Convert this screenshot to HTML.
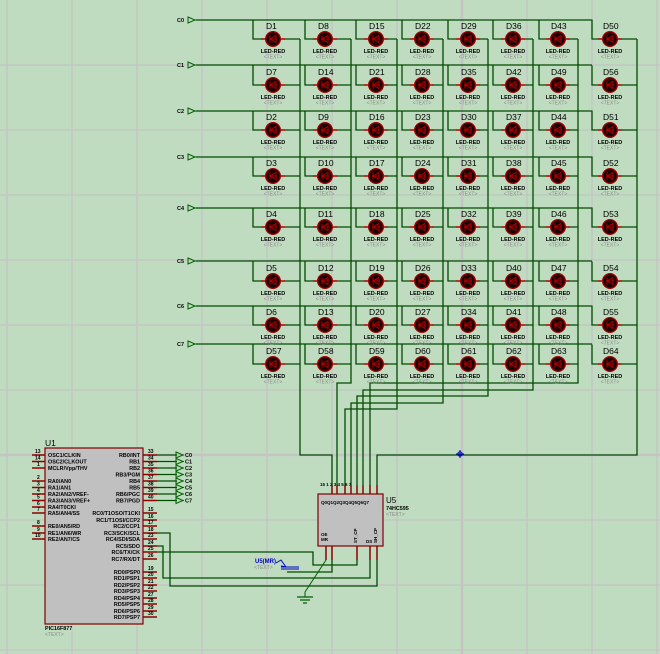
<!DOCTYPE html>
<html><head><meta charset="utf-8"><style>
html,body{margin:0;padding:0;background:#c0dcc0;}
svg{display:block;font-family:"Liberation Sans",sans-serif;}
.w{fill:none;stroke:#004c00;stroke-width:1.3}
.g{stroke:#c4c4c4;stroke-width:1.3}
.dl{font-size:8.5px;fill:#000}
.lr{font-size:5.5px;font-weight:bold;fill:#000}
.tx{font-size:5px;fill:#888}
.pn{font-size:5px;fill:#000;font-weight:bold}
.pl{font-size:5.4px;fill:#000;font-weight:bold}
.p{stroke:#900000;stroke-width:1.5}
</style></head><body>
<svg width="660" height="654" viewBox="0 0 660 654" xmlns="http://www.w3.org/2000/svg">
<defs>
<g id="L">
<line x1="-12" y1="0" x2="-7" y2="0" stroke="#c00000" stroke-width="1.4"/>
<line x1="7" y1="0" x2="12" y2="0" stroke="#c00000" stroke-width="1.4"/>
<circle r="7.3" fill="#1a0000" stroke="#a00000" stroke-width="1.4"/>
<path d="M-4,0 H4 M3,-3.5 V3.5 L-3,0 Z M-3,-3.5 V3.5" stroke="#b00000" stroke-width="1" fill="none"/>
</g>
<g id="R">
<path class="w" d="M253,-19.5V0H300M305,-19.5V0H351M356,-19.5V0H397M402,-19.5V0H443M448,-19.5V0H488M493,-19.5V0H533M539,-19.5V0H578M592,-19.5V0H637"/>
<use href="#L" x="273"/><use href="#L" x="325"/><use href="#L" x="376"/><use href="#L" x="422"/><use href="#L" x="468"/><use href="#L" x="513"/><use href="#L" x="558"/><use href="#L" x="610"/>
</g>
<path id="A" d="M0,-3 L7,0 L0,3 Z M7,0 H8" fill="none" stroke="#006000" stroke-width="1"/>
</defs>
<!-- grid -->
<g class="g">
<line x1="7" y1="0" x2="7" y2="654"/><line x1="72" y1="0" x2="72" y2="654"/><line x1="137" y1="0" x2="137" y2="654"/><line x1="202" y1="0" x2="202" y2="654"/><line x1="267" y1="0" x2="267" y2="654"/><line x1="332" y1="0" x2="332" y2="654"/><line x1="397" y1="0" x2="397" y2="654"/><line x1="462" y1="0" x2="462" y2="654" stroke-width="2.5"/><line x1="527" y1="0" x2="527" y2="654"/><line x1="592" y1="0" x2="592" y2="654"/><line x1="657" y1="0" x2="657" y2="654"/>
<line x1="0" y1="65" x2="660" y2="65"/><line x1="0" y1="130" x2="660" y2="130"/><line x1="0" y1="195" x2="660" y2="195"/><line x1="0" y1="260" x2="660" y2="260"/><line x1="0" y1="325" x2="660" y2="325"/><line x1="0" y1="390" x2="660" y2="390"/><line x1="0" y1="455" x2="660" y2="455" stroke-width="2.5"/><line x1="0" y1="520" x2="660" y2="520"/><line x1="0" y1="585" x2="660" y2="585"/><line x1="0" y1="650" x2="660" y2="650"/>
</g>
<!-- row lines -->
<path class="w" d="M196,20H592M196,65H592M196,111H592M196,157H592M196,208H592M196,261H592M196,306H592M196,344H592"/>
<!-- column buses -->
<path class="w" d="M300,39V455H332V485M351,39V383H337V485M397,39V409H345V485M443,39V403H351V485M488,39V396H357V485M533,39V390H363V485M578,39V383H370V485M637,39V455H377V485"/>
<g transform="translate(-1,-1)"><path d="M461,451V459M457,455H465" stroke="#0000c0" stroke-width="1"/><circle cx="461" cy="455" r="2.2" fill="none" stroke="#0000c0"/></g>
<!-- input ports -->
<g font-size="5.5" font-weight="bold">
<text x="177" y="22">C0</text><use href="#A" x="188" y="20"/>
<text x="177" y="67">C1</text><use href="#A" x="188" y="65"/>
<text x="177" y="113">C2</text><use href="#A" x="188" y="111"/>
<text x="177" y="159">C3</text><use href="#A" x="188" y="157"/>
<text x="177" y="210">C4</text><use href="#A" x="188" y="208"/>
<text x="177" y="263">C5</text><use href="#A" x="188" y="261"/>
<text x="177" y="308">C6</text><use href="#A" x="188" y="306"/>
<text x="177" y="346">C7</text><use href="#A" x="188" y="344"/>
</g>
<!-- LED rows -->
<use href="#R" y="39"/><use href="#R" y="85"/><use href="#R" y="130"/><use href="#R" y="176"/><use href="#R" y="227"/><use href="#R" y="281"/><use href="#R" y="325"/><use href="#R" y="364"/>
<g class="dl">
<g transform="translate(0,29)"><text x="266">D1</text><text x="318">D8</text><text x="369">D15</text><text x="415">D22</text><text x="461">D29</text><text x="506">D36</text><text x="551">D43</text><text x="603">D50</text></g>
<g transform="translate(0,75)"><text x="266">D7</text><text x="318">D14</text><text x="369">D21</text><text x="415">D28</text><text x="461">D35</text><text x="506">D42</text><text x="551">D49</text><text x="603">D56</text></g>
<g transform="translate(0,120)"><text x="266">D2</text><text x="318">D9</text><text x="369">D16</text><text x="415">D23</text><text x="461">D30</text><text x="506">D37</text><text x="551">D44</text><text x="603">D51</text></g>
<g transform="translate(0,166)"><text x="266">D3</text><text x="318">D10</text><text x="369">D17</text><text x="415">D24</text><text x="461">D31</text><text x="506">D38</text><text x="551">D45</text><text x="603">D52</text></g>
<g transform="translate(0,217)"><text x="266">D4</text><text x="318">D11</text><text x="369">D18</text><text x="415">D25</text><text x="461">D32</text><text x="506">D39</text><text x="551">D46</text><text x="603">D53</text></g>
<g transform="translate(0,271)"><text x="266">D5</text><text x="318">D12</text><text x="369">D19</text><text x="415">D26</text><text x="461">D33</text><text x="506">D40</text><text x="551">D47</text><text x="603">D54</text></g>
<g transform="translate(0,315)"><text x="266">D6</text><text x="318">D13</text><text x="369">D20</text><text x="415">D27</text><text x="461">D34</text><text x="506">D41</text><text x="551">D48</text><text x="603">D55</text></g>
<g transform="translate(0,354)"><text x="266">D57</text><text x="318">D58</text><text x="369">D59</text><text x="415">D60</text><text x="461">D61</text><text x="506">D62</text><text x="551">D63</text><text x="603">D64</text></g>
</g>
<g text-anchor="middle">
<g transform="translate(0,53)"><g class="lr"><text x="273">LED-RED</text><text x="325">LED-RED</text><text x="376">LED-RED</text><text x="422">LED-RED</text><text x="468">LED-RED</text><text x="513">LED-RED</text><text x="558">LED-RED</text><text x="610">LED-RED</text></g><g class="tx" transform="translate(0,5.5)"><text x="273">&lt;TEXT&gt;</text><text x="325">&lt;TEXT&gt;</text><text x="376">&lt;TEXT&gt;</text><text x="422">&lt;TEXT&gt;</text><text x="468">&lt;TEXT&gt;</text><text x="513">&lt;TEXT&gt;</text><text x="558">&lt;TEXT&gt;</text><text x="610">&lt;TEXT&gt;</text></g></g>
<g transform="translate(0,99)"><g class="lr"><text x="273">LED-RED</text><text x="325">LED-RED</text><text x="376">LED-RED</text><text x="422">LED-RED</text><text x="468">LED-RED</text><text x="513">LED-RED</text><text x="558">LED-RED</text><text x="610">LED-RED</text></g><g class="tx" transform="translate(0,5.5)"><text x="273">&lt;TEXT&gt;</text><text x="325">&lt;TEXT&gt;</text><text x="376">&lt;TEXT&gt;</text><text x="422">&lt;TEXT&gt;</text><text x="468">&lt;TEXT&gt;</text><text x="513">&lt;TEXT&gt;</text><text x="558">&lt;TEXT&gt;</text><text x="610">&lt;TEXT&gt;</text></g></g>
<g transform="translate(0,144)"><g class="lr"><text x="273">LED-RED</text><text x="325">LED-RED</text><text x="376">LED-RED</text><text x="422">LED-RED</text><text x="468">LED-RED</text><text x="513">LED-RED</text><text x="558">LED-RED</text><text x="610">LED-RED</text></g><g class="tx" transform="translate(0,5.5)"><text x="273">&lt;TEXT&gt;</text><text x="325">&lt;TEXT&gt;</text><text x="376">&lt;TEXT&gt;</text><text x="422">&lt;TEXT&gt;</text><text x="468">&lt;TEXT&gt;</text><text x="513">&lt;TEXT&gt;</text><text x="558">&lt;TEXT&gt;</text><text x="610">&lt;TEXT&gt;</text></g></g>
<g transform="translate(0,190)"><g class="lr"><text x="273">LED-RED</text><text x="325">LED-RED</text><text x="376">LED-RED</text><text x="422">LED-RED</text><text x="468">LED-RED</text><text x="513">LED-RED</text><text x="558">LED-RED</text><text x="610">LED-RED</text></g><g class="tx" transform="translate(0,5.5)"><text x="273">&lt;TEXT&gt;</text><text x="325">&lt;TEXT&gt;</text><text x="376">&lt;TEXT&gt;</text><text x="422">&lt;TEXT&gt;</text><text x="468">&lt;TEXT&gt;</text><text x="513">&lt;TEXT&gt;</text><text x="558">&lt;TEXT&gt;</text><text x="610">&lt;TEXT&gt;</text></g></g>
<g transform="translate(0,241)"><g class="lr"><text x="273">LED-RED</text><text x="325">LED-RED</text><text x="376">LED-RED</text><text x="422">LED-RED</text><text x="468">LED-RED</text><text x="513">LED-RED</text><text x="558">LED-RED</text><text x="610">LED-RED</text></g><g class="tx" transform="translate(0,5.5)"><text x="273">&lt;TEXT&gt;</text><text x="325">&lt;TEXT&gt;</text><text x="376">&lt;TEXT&gt;</text><text x="422">&lt;TEXT&gt;</text><text x="468">&lt;TEXT&gt;</text><text x="513">&lt;TEXT&gt;</text><text x="558">&lt;TEXT&gt;</text><text x="610">&lt;TEXT&gt;</text></g></g>
<g transform="translate(0,295)"><g class="lr"><text x="273">LED-RED</text><text x="325">LED-RED</text><text x="376">LED-RED</text><text x="422">LED-RED</text><text x="468">LED-RED</text><text x="513">LED-RED</text><text x="558">LED-RED</text><text x="610">LED-RED</text></g><g class="tx" transform="translate(0,5.5)"><text x="273">&lt;TEXT&gt;</text><text x="325">&lt;TEXT&gt;</text><text x="376">&lt;TEXT&gt;</text><text x="422">&lt;TEXT&gt;</text><text x="468">&lt;TEXT&gt;</text><text x="513">&lt;TEXT&gt;</text><text x="558">&lt;TEXT&gt;</text><text x="610">&lt;TEXT&gt;</text></g></g>
<g transform="translate(0,339)"><g class="lr"><text x="273">LED-RED</text><text x="325">LED-RED</text><text x="376">LED-RED</text><text x="422">LED-RED</text><text x="468">LED-RED</text><text x="513">LED-RED</text><text x="558">LED-RED</text><text x="610">LED-RED</text></g><g class="tx" transform="translate(0,5.5)"><text x="273">&lt;TEXT&gt;</text><text x="325">&lt;TEXT&gt;</text><text x="376">&lt;TEXT&gt;</text><text x="422">&lt;TEXT&gt;</text><text x="468">&lt;TEXT&gt;</text><text x="513">&lt;TEXT&gt;</text><text x="558">&lt;TEXT&gt;</text><text x="610">&lt;TEXT&gt;</text></g></g>
<g transform="translate(0,378)"><g class="lr"><text x="273">LED-RED</text><text x="325">LED-RED</text><text x="376">LED-RED</text><text x="422">LED-RED</text><text x="468">LED-RED</text><text x="513">LED-RED</text><text x="558">LED-RED</text><text x="610">LED-RED</text></g><g class="tx" transform="translate(0,5.5)"><text x="273">&lt;TEXT&gt;</text><text x="325">&lt;TEXT&gt;</text><text x="376">&lt;TEXT&gt;</text><text x="422">&lt;TEXT&gt;</text><text x="468">&lt;TEXT&gt;</text><text x="513">&lt;TEXT&gt;</text><text x="558">&lt;TEXT&gt;</text><text x="610">&lt;TEXT&gt;</text></g></g>
</g>
<!-- bottom wiring -->
<path class="w" d="M157,533H170V586H377V560M157,546H163V578H370V560M157,552H313V565H357V560M287,572H332V560M157,455H177M157,461.5H177M157,468H177M157,474.5H177M157,481H177M157,487.5H177M157,494H177M157,500.5H177"/>
<path d="M326,560 L305,592 V597" fill="none" stroke="#006000" stroke-width="1"/>
<path d="M297,597H313M300,600H310M303,603H307" stroke="#006000" stroke-width="1.2"/>
<!-- C outputs -->
<g font-size="5.5" font-weight="bold">
<use href="#A" x="176" y="455"/><text x="185" y="457">C0</text>
<use href="#A" x="176" y="461.5"/><text x="185" y="463.5">C1</text>
<use href="#A" x="176" y="468"/><text x="185" y="470">C2</text>
<use href="#A" x="176" y="474.5"/><text x="185" y="476.5">C3</text>
<use href="#A" x="176" y="481"/><text x="185" y="483">C4</text>
<use href="#A" x="176" y="487.5"/><text x="185" y="489.5">C5</text>
<use href="#A" x="176" y="494"/><text x="185" y="496">C6</text>
<use href="#A" x="176" y="500.5"/><text x="185" y="502.5">C7</text>
</g>
<!-- U1 -->
<text x="45" y="446" font-size="8.5">U1</text>
<rect x="45" y="448" width="98" height="176" fill="#c0c0c0" stroke="#800000" stroke-width="1.2"/>
<g class="p">
<path d="M32,455H45M32,461.5H45M32,468H45M32,481H45M32,487.5H45M32,494H45M32,500.5H45M32,507H45M32,513H45M32,526H45M32,533H45M32,539H45"/>
<path d="M143,455H157M143,461.5H157M143,468H157M143,474.5H157M143,481H157M143,487.5H157M143,494H157M143,500.5H157M143,513H157M143,520H157M143,526H157M143,533H157M143,539H157M143,546H157M143,552H157M143,559H157M143,572H157M143,578H157M143,585H157M143,591H157M143,598H157M143,604H157M143,611H157M143,617H157"/>
</g>
<g class="pn">
<text x="35" y="453">13</text><text x="35" y="459.5">14</text><text x="37" y="466">1</text><text x="37" y="479">2</text><text x="37" y="485.5">3</text><text x="37" y="492">4</text><text x="37" y="498.5">5</text><text x="37" y="505">6</text><text x="37" y="511">7</text><text x="37" y="524">8</text><text x="37" y="531">9</text><text x="35" y="537">10</text>
<text x="148" y="453">33</text><text x="148" y="459.5">34</text><text x="148" y="466">35</text><text x="148" y="472.5">36</text><text x="148" y="479">37</text><text x="148" y="485.5">38</text><text x="148" y="492">39</text><text x="148" y="498.5">40</text>
<text x="148" y="511">15</text><text x="148" y="518">16</text><text x="148" y="524">17</text><text x="148" y="531">18</text><text x="148" y="537">23</text><text x="148" y="544">24</text><text x="148" y="550">25</text><text x="148" y="557">26</text>
<text x="148" y="570">19</text><text x="148" y="576">20</text><text x="148" y="583">21</text><text x="148" y="589">22</text><text x="148" y="596">27</text><text x="148" y="602">28</text><text x="148" y="609">29</text><text x="148" y="615">30</text>
</g>
<g class="pl">
<text x="48" y="457">OSC1/CLKIN</text><text x="48" y="463.5">OSC2/CLKOUT</text><text x="48" y="470">MCLR/Vpp/THV</text>
<text x="48" y="483">RA0/AN0</text><text x="48" y="489.5">RA1/AN1</text><text x="48" y="496">RA2/AN2/VREF-</text><text x="48" y="502.5">RA3/AN3/VREF+</text><text x="48" y="509">RA4/T0CKI</text><text x="48" y="515">RA5/AN4/SS</text>
<text x="48" y="528">RE0/AN5/RD</text><text x="48" y="535">RE1/AN6/WR</text><text x="48" y="541">RE2/AN7/CS</text>
</g>
<g class="pl" text-anchor="end">
<text x="140" y="457">RB0/INT</text><text x="140" y="463.5">RB1</text><text x="140" y="470">RB2</text><text x="140" y="476.5">RB3/PGM</text><text x="140" y="483">RB4</text><text x="140" y="489.5">RB5</text><text x="140" y="496">RB6/PGC</text><text x="140" y="502.5">RB7/PGD</text>
<text x="140" y="515">RC0/T1OSO/T1CKI</text><text x="140" y="522">RC1/T1OSI/CCP2</text><text x="140" y="528">RC2/CCP1</text><text x="140" y="535">RC3/SCK/SCL</text><text x="140" y="541">RC4/SDI/SDA</text><text x="140" y="548">RC5/SDO</text><text x="140" y="554">RC6/TX/CK</text><text x="140" y="561">RC7/RX/DT</text>
<text x="140" y="574">RD0/PSP0</text><text x="140" y="580">RD1/PSP1</text><text x="140" y="587">RD2/PSP2</text><text x="140" y="593">RD3/PSP3</text><text x="140" y="600">RD4/PSP4</text><text x="140" y="606">RD5/PSP5</text><text x="140" y="613">RD6/PSP6</text><text x="140" y="619">RD7/PSP7</text>
</g>
<text x="45" y="630" class="pl">PIC16F877</text>
<text x="45" y="636" class="tx">&lt;TEXT&gt;</text>
<!-- U5 -->
<rect x="318" y="494" width="65" height="52" fill="#c0c0c0" stroke="#800000" stroke-width="1.2"/>
<g class="p"><path d="M332,485V494M337,485V494M345,485V494M351,485V494M357,485V494M363,485V494M370,485V494M377,485V494M326,546V560M332,546V560M357,546V560M370,546V560M377,546V560"/></g>
<g font-size="4.5" font-weight="bold">
<text x="320" y="486">15 1 2 3 4 5 6 7</text>
<text x="321" y="504">Q0Q1Q2Q3Q4Q5Q6Q7</text>
<text x="321" y="541">MR</text><text x="321" y="536">OE</text>
<text transform="translate(357,543) rotate(-90)">ST_CP</text>
<text transform="translate(377,543) rotate(-90)">SH_CP</text>
<text x="366" y="543">DS</text>
</g>
<text x="386" y="503" font-size="8">U5</text>
<text x="386" y="510" class="pl">74HC595</text>
<text x="386" y="516" class="tx">&lt;TEXT&gt;</text>
<!-- probe -->
<text x="255" y="563" font-size="6" fill="#0000c0" font-weight="bold">U5(MR)</text>
<text x="254" y="569" class="tx">&lt;TEXT&gt;</text>
<path d="M276,563 L281,560 L286,567 M286,567 L281,566 M281,567H299M281,569H299" fill="none" stroke="#0000c0" stroke-width="1"/>
</svg>
</body></html>
